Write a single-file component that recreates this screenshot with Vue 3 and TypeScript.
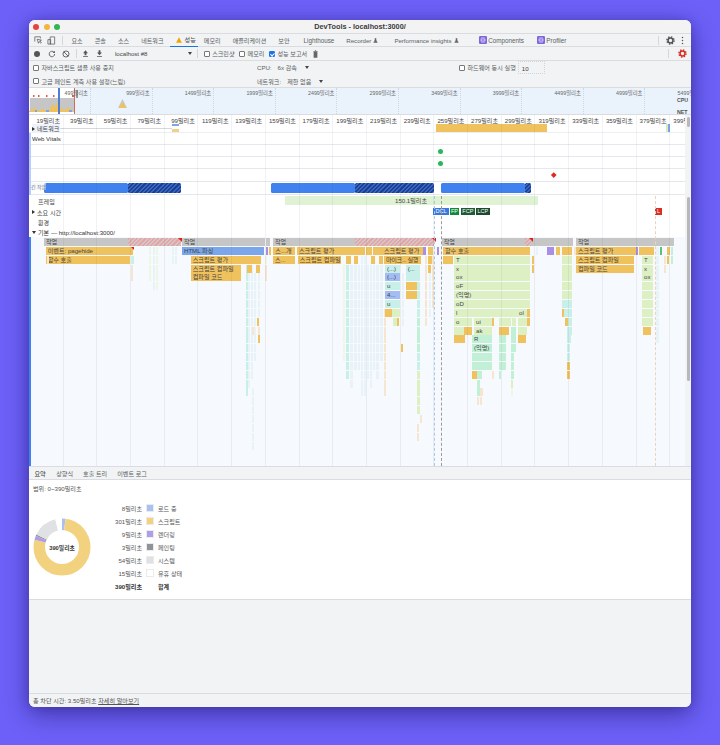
<script setup lang="ts">
interface Bar {
  r: number
  x1: number
  x2: number
  c: string
  t?: string
}

const tabs = ['요소', '콘솔', '소스', '네트워크']
const tabsAfter = ['메모리', '애플리케이션', '보안']
const subTabs = ['요약', '상향식', '호출 트리', '이벤트 로그']

const legend = [
  { value: '8밀리초', label: '로드 중', color: '#a9c1f2' },
  { value: '301밀리초', label: '스크립트', color: '#f2d17f' },
  { value: '9밀리초', label: '렌더링', color: '#ad9ee6' },
  { value: '3밀리초', label: '페인팅', color: '#8f9499' },
  { value: '54밀리초', label: '시스템', color: '#dfe1e5' },
  { value: '15밀리초', label: '유휴 상태', color: '#ffffff' },
]

// donut segments, pathLength is 390 so dash values are milliseconds
const donut = [
  { n: 8, color: '#a9c1f2' },
  { n: 301, color: '#f2d17f' },
  { n: 9, color: '#ad9ee6' },
  { n: 3, color: '#8f9499' },
  { n: 54, color: '#dfe1e5' },
  { n: 15, color: '#ffffff' },
].map((s, i, all) => ({
  ...s,
  offset: -all.slice(0, i).reduce((sum, p) => sum + p.n, 0),
}))

const ROW = 8.85
const gridX = Array.from({ length: 19 }, (_, i) => 62.6 + i * 33.7)
const rulerLabels = Array.from({ length: 20 }, (_, i) => ({ x: 60 + i * 33.7, t: `${19 + i * 20}밀리초` }))
const overviewLabels = Array.from({ length: 11 }, (_, i) => ({ x: 88 + i * 61.6, t: `${499 + i * 500}밀리초` }))

const bars: Bar[] = [
  // row 0 tasks
  { r: 0, x1: 44, x2: 128, c: 'task', t: '작업' },
  { r: 0, x1: 128, x2: 180.5, c: 'hatch' },
  { r: 0, x1: 182, x2: 265, c: 'task', t: '작업' },
  { r: 0, x1: 266, x2: 270, c: 'task' },
  { r: 0, x1: 273, x2: 355, c: 'task', t: '작업' },
  { r: 0, x1: 355, x2: 433.7, c: 'hatch' },
  { r: 0, x1: 441.7, x2: 525, c: 'task', t: '작업' },
  { r: 0, x1: 525, x2: 531, c: 'hatch' },
  { r: 0, x1: 531, x2: 573, c: 'task' },
  { r: 0, x1: 576, x2: 674, c: 'task', t: '작업' },
  // row 1
  { r: 1, x1: 45.7, x2: 133, c: 'y', t: '이벤트: pagehide' },
  { r: 1, x1: 182, x2: 264.3, c: 'b', t: 'HTML 파싱' },
  { r: 1, x1: 266, x2: 268, c: 'p' },
  { r: 1, x1: 268.5, x2: 270, c: 'y' },
  { r: 1, x1: 273.3, x2: 295, c: 'y', t: '스...개' },
  { r: 1, x1: 297, x2: 365, c: 'y', t: '스크립트 평가' },
  { r: 1, x1: 366, x2: 372, c: 'y' },
  { r: 1, x1: 373, x2: 382, c: 'y' },
  { r: 1, x1: 382, x2: 423, c: 'y', t: '스크립트 평가' },
  { r: 1, x1: 423, x2: 426, c: 'p' },
  { r: 1, x1: 428, x2: 433, c: 'y' },
  { r: 1, x1: 437, x2: 439, c: 'p' },
  { r: 1, x1: 443, x2: 530, c: 'y', t: '함수 호출' },
  { r: 1, x1: 547, x2: 554, c: 'p' },
  { r: 1, x1: 556, x2: 560, c: 'y' },
  { r: 1, x1: 562, x2: 572, c: 'y' },
  { r: 1, x1: 576, x2: 636, c: 'y', t: '스크립트 평가' },
  { r: 1, x1: 636, x2: 638, c: 'p' },
  { r: 1, x1: 639, x2: 654, c: 'y' },
  { r: 1, x1: 660, x2: 661.5, c: 'g2' },
  { r: 1, x1: 667, x2: 670, c: 'y' },
  { r: 1, x1: 671, x2: 673, c: 'm' },
  // row 2
  { r: 2, x1: 45.7, x2: 130.3, c: 'y', t: '함수 호출' },
  { r: 2, x1: 131, x2: 134, c: 'te' },
  { r: 2, x1: 190.7, x2: 260.7, c: 'y', t: '스크립트 평가' },
  { r: 2, x1: 273, x2: 295, c: 'y', t: '스...' },
  { r: 2, x1: 297.7, x2: 340.7, c: 'y', t: '스크립트 컴파일' },
  { r: 2, x1: 346, x2: 351, c: 'y' },
  { r: 2, x1: 354, x2: 358, c: 'y' },
  { r: 2, x1: 371, x2: 375, c: 'y' },
  { r: 2, x1: 379, x2: 383, c: 'y' },
  { r: 2, x1: 384, x2: 421, c: 'y tight', t: '마이크... 실행' },
  { r: 2, x1: 428, x2: 432, c: 'y' },
  { r: 2, x1: 443, x2: 453, c: 'y' },
  { r: 2, x1: 454, x2: 530, c: 'g', t: 'T' },
  { r: 2, x1: 532, x2: 533.5, c: 'y' },
  { r: 2, x1: 562, x2: 572, c: 'g' },
  { r: 2, x1: 576, x2: 634, c: 'y', t: '스크립트 컴파일' },
  { r: 2, x1: 642, x2: 653, c: 'g', t: 'T' },
  { r: 2, x1: 667, x2: 669, c: 'y' },
  { r: 2, x1: 671, x2: 673, c: 'm' },
  // row 3
  { r: 3, x1: 190.7, x2: 241, c: 'y', t: '스크립트 컴파일' },
  { r: 3, x1: 246.7, x2: 251.7, c: 'y' },
  { r: 3, x1: 256, x2: 259.6, c: 'y' },
  { r: 3, x1: 385, x2: 400, c: 'te', t: '(...)' },
  { r: 3, x1: 405.7, x2: 420, c: 'te', t: '(...' },
  { r: 3, x1: 428, x2: 431, c: 'y' },
  { r: 3, x1: 454, x2: 530, c: 'g', t: 'x' },
  { r: 3, x1: 532, x2: 533.5, c: 'y' },
  { r: 3, x1: 562, x2: 572, c: 'g' },
  { r: 3, x1: 576, x2: 634, c: 'y', t: '컴파일 코드' },
  { r: 3, x1: 642, x2: 653, c: 'g', t: 'x' },
  // row 4
  { r: 4, x1: 190.7, x2: 241, c: 'y', t: '컴파일 코드' },
  { r: 4, x1: 385, x2: 400, c: 'b2', t: '(...)' },
  { r: 4, x1: 405.7, x2: 420, c: 'te' },
  { r: 4, x1: 454, x2: 530, c: 'g', t: 'ox' },
  { r: 4, x1: 562, x2: 572, c: 'g' },
  { r: 4, x1: 642, x2: 653, c: 'g', t: 'ox' },
  // row 5
  { r: 5, x1: 385, x2: 400, c: 'te', t: 'u' },
  { r: 5, x1: 405.7, x2: 416.7, c: 'y' },
  { r: 5, x1: 417, x2: 420, c: 'te' },
  { r: 5, x1: 454, x2: 530, c: 'g', t: 'oF' },
  { r: 5, x1: 562, x2: 572, c: 'g' },
  { r: 5, x1: 642, x2: 653, c: 'g' },
  // row 6
  { r: 6, x1: 385, x2: 400, c: 'b2', t: '4...' },
  { r: 6, x1: 405.7, x2: 416.7, c: 'y' },
  { r: 6, x1: 417, x2: 420, c: 'te' },
  { r: 6, x1: 454, x2: 530, c: 'g', t: '(익명)' },
  { r: 6, x1: 562, x2: 572, c: 'g' },
  { r: 6, x1: 642, x2: 653, c: 'g' },
  // row 7
  { r: 7, x1: 385, x2: 400, c: 'te', t: 'u' },
  { r: 7, x1: 417, x2: 420, c: 'te' },
  { r: 7, x1: 454, x2: 530, c: 'g', t: 'oD' },
  { r: 7, x1: 562, x2: 572, c: 'te' },
  { r: 7, x1: 642, x2: 653, c: 'g' },
  // row 8
  { r: 8, x1: 385, x2: 392.3, c: 'y' },
  { r: 8, x1: 392.3, x2: 400, c: 'g' },
  { r: 8, x1: 417, x2: 420, c: 'te' },
  { r: 8, x1: 454, x2: 517, c: 'g', t: 'l' },
  { r: 8, x1: 517, x2: 527, c: 'g', t: 'ol' },
  { r: 8, x1: 527, x2: 530, c: 'y' },
  { r: 8, x1: 562, x2: 564, c: 'y' },
  { r: 8, x1: 564, x2: 572, c: 'te' },
  { r: 8, x1: 642, x2: 653, c: 'g' },
  // row 9
  { r: 9, x1: 393, x2: 397, c: 'g' },
  { r: 9, x1: 397, x2: 399, c: 'y' },
  { r: 9, x1: 417, x2: 420, c: 'm' },
  { r: 9, x1: 454, x2: 471.7, c: 'g', t: 'o' },
  { r: 9, x1: 474, x2: 491.7, c: 'g', t: 'ui' },
  { r: 9, x1: 492, x2: 494, c: 'y' },
  { r: 9, x1: 499, x2: 511, c: 'g' },
  { r: 9, x1: 511.5, x2: 516, c: 'g' },
  { r: 9, x1: 518, x2: 527, c: 'g' },
  { r: 9, x1: 527, x2: 530, c: 'y' },
  { r: 9, x1: 565, x2: 568, c: 'y' },
  { r: 9, x1: 568, x2: 572, c: 'te' },
  { r: 9, x1: 642, x2: 653, c: 'g' },
  // row 10
  { r: 10, x1: 417, x2: 420, c: 'm' },
  { r: 10, x1: 454, x2: 464, c: 'g' },
  { r: 10, x1: 464, x2: 472, c: 'y' },
  { r: 10, x1: 474, x2: 492, c: 'g', t: 'ak' },
  { r: 10, x1: 499, x2: 506, c: 'y' },
  { r: 10, x1: 506, x2: 509, c: 'y' },
  { r: 10, x1: 511, x2: 516, c: 'm' },
  { r: 10, x1: 518, x2: 527, c: 'g' },
  { r: 10, x1: 567, x2: 572, c: 'te' },
  { r: 10, x1: 643, x2: 651, c: 'y' },
  // row 11
  { r: 11, x1: 417, x2: 420, c: 'm' },
  { r: 11, x1: 454, x2: 465, c: 'y' },
  { r: 11, x1: 472, x2: 492, c: 'm', t: 'R' },
  { r: 11, x1: 499, x2: 506, c: 'm' },
  { r: 11, x1: 511, x2: 516, c: 'm' },
  { r: 11, x1: 518, x2: 526, c: 'y' },
  { r: 11, x1: 567, x2: 571, c: 'te' },
  // row 12
  { r: 12, x1: 401, x2: 403, c: 'y' },
  { r: 12, x1: 417, x2: 420, c: 'm' },
  { r: 12, x1: 472, x2: 492, c: 'm', t: '(익명)' },
  { r: 12, x1: 499, x2: 506, c: 'm' },
  { r: 12, x1: 511, x2: 516, c: 'm' },
  { r: 12, x1: 567, x2: 570, c: 'te' },
  // rows below
  { r: 13, x1: 417, x2: 420, c: 'te' },
  { r: 13, x1: 472, x2: 492, c: 'm' },
  { r: 13, x1: 499, x2: 506, c: 'm' },
  { r: 13, x1: 511, x2: 514, c: 'm' },
  { r: 13, x1: 567, x2: 570, c: 'te' },
  { r: 14, x1: 417, x2: 420, c: 'te' },
  { r: 14, x1: 472, x2: 492, c: 'm' },
  { r: 14, x1: 499, x2: 506, c: 'm' },
  { r: 14, x1: 511, x2: 514, c: 'm' },
  { r: 14, x1: 567, x2: 570, c: 'y' },
  { r: 15, x1: 417, x2: 420, c: 'g' },
  { r: 15, x1: 472, x2: 477, c: 'y' },
  { r: 15, x1: 477, x2: 481.5, c: 'm' },
  { r: 15, x1: 492, x2: 493, c: 'py' },
  { r: 15, x1: 499, x2: 500, c: 'm' },
  { r: 15, x1: 511, x2: 514, c: 'm' },
  { r: 15, x1: 567, x2: 570, c: 'y' },
  { r: 16, x1: 417, x2: 420, c: 'g' },
  { r: 16, x1: 477, x2: 480, c: 'm' },
  { r: 16, x1: 511, x2: 513, c: 'g' },
  { r: 17, x1: 417, x2: 420, c: 'g' },
  { r: 17, x1: 477, x2: 480, c: 'm' },
  { r: 17, x1: 480, x2: 483, c: 'py' },
  { r: 17, x1: 511, x2: 513, c: 'pg' },
  { r: 18, x1: 417, x2: 420, c: 'g' },
  { r: 18, x1: 477, x2: 479, c: 'py' },
  { r: 18, x1: 480, x2: 482, c: 'py' },
  { r: 19, x1: 417, x2: 420, c: 'g' },
  { r: 20, x1: 420, x2: 421, c: 'py' },
  { r: 21, x1: 417, x2: 418, c: 'py' },
  { r: 22, x1: 417, x2: 418, c: 'py' },
  // small left marks
  { r: 2, x1: 47, x2: 48, c: 'py' },
  { r: 3, x1: 131, x2: 132.5, c: 'py' },
  { r: 4, x1: 131, x2: 132.5, c: 'py' },
  { r: 2, x1: 265, x2: 267, c: 'pg' },
  { r: 3, x1: 265, x2: 266, c: 'py' },
  { r: 4, x1: 265, x2: 266, c: 'py' },
  { r: 9, x1: 257, x2: 259, c: 'y' },
  { r: 10, x1: 252, x2: 253, c: 'py' },
  { r: 10, x1: 258, x2: 259, c: 'py' },
  { r: 11, x1: 258, x2: 259, c: 'y' },
]

// pale columns under the script blocks: [x, width, first row, last row, colour]
const columns: [number, number, number, number, string][] = [
  [149, 1, 1, 4, 'pg'], [153, 1, 1, 5, 'pt'], [156, 1, 1, 5, 'pg'], [172, 2, 1, 2, 'pt'], [175, 2, 1, 2, 'pt'],
  [245.7, 1.5, 3, 17, 'te'], [248, 2, 3, 16, 'pt'], [251, 2, 3, 15, 'pt'], [254, 2, 4, 13, 'pt'], [258, 1, 3, 8, 'pt'], [252, 0.7, 17, 23, 'pt'],
  [343, 2, 3, 13, 'pg'], [346, 3, 3, 15, 'te'], [350, 3, 3, 16, 'pt'], [354, 3, 3, 14, 'pt'], [358, 2, 3, 14, 'pt'],
  [361, 2, 2, 17, 'pt'], [364, 2, 2, 17, 'pt'], [367, 2, 3, 15, 'pt'], [370, 2, 3, 16, 'pt'], [373, 2, 3, 14, 'pt'],
  [376, 3, 3, 15, 'pt'], [380, 3, 3, 13, 'pt'], [384, 1, 8, 17, 'py'], [402, 2, 4, 9, 'pt'],
  [425, 1, 2, 9, 'py'], [429, 2, 3, 8, 'pt'], [432, 1, 2, 7, 'py'],
  [536, 1, 1, 1, 'pt'], [574, 1, 1, 1, 'py'], [664, 1, 2, 3, 'py'], [656, 3, 1, 11, 'pt'],
]

const allBars = [
  ...columns.flatMap(([x, w, from, to, c]) =>
    Array.from({ length: to - from + 1 }, (_, i) => ({ r: from + i, x1: x, x2: x + w, c } as Bar)),
  ),
  ...bars,
]

function barStyle(b: Bar) {
  return {
    left: `${b.x1 - 29}px`,
    width: `${b.x2 - b.x1}px`,
    top: `${1 + b.r * ROW}px`,
  }
}
</script>

<template>
  <div class="page">
    <div class="window">
      <div class="titlebar">
        <div class="lights"><i class="light-red"></i><i class="light-amber"></i><i class="light-green"></i></div>
        <span class="title">DevTools - localhost:3000/</span>
      </div>

      <div class="tabbar">
        <svg viewBox="0 0 10 10" width="8" height="8"><path d="M1 7V1h7v2M4 4l1.5 5 1-2 2 2 .8-.8-2-2 2-1z" fill="none" stroke="#555" stroke-width=".9"/></svg>
        <svg class="dev" viewBox="0 0 10 10" width="9" height="9"><path d="M3.5 1h5v8h-5zM1 4h3v5H1z" fill="#f1f3f4" stroke="#555" stroke-width=".8"/></svg>
        <span class="vsep first"></span>
        <span v-for="t in tabs" :key="t" class="tab">{{ t }}</span>
        <span class="tab active">
          <svg viewBox="0 0 10 10" width="6" height="6"><path d="M5 .5 9.8 9.5H.2z" fill="#f2a600"/></svg>
          성능
        </span>
        <span v-for="t in tabsAfter" :key="t" class="tab">{{ t }}</span>
        <span class="tab lh">Lighthouse</span>
        <span class="tab">Recorder
          <svg viewBox="0 0 10 10" width="5" height="5"><path d="M3.5 1h3M4 1v3L1.5 9h7L6 4V1" fill="#666" stroke="#666"/></svg>
        </span>
        <span class="tab perf">Performance insights
          <svg viewBox="0 0 10 10" width="5" height="5"><path d="M3.5 1h3M4 1v3L1.5 9h7L6 4V1" fill="#666" stroke="#666"/></svg>
        </span>
        <span class="tab ext">
          <svg viewBox="0 0 10 10" width="8" height="8"><rect width="10" height="10" rx="1.5" fill="#7d66d9"/><g fill="none" stroke="#e7e0ff" stroke-width=".5"><ellipse cx="5" cy="5" rx="3.6" ry="1.4"/><ellipse cx="5" cy="5" rx="3.6" ry="1.4" transform="rotate(60 5 5)"/><ellipse cx="5" cy="5" rx="3.6" ry="1.4" transform="rotate(120 5 5)"/></g></svg>
          Components
        </span>
        <span class="tab ext prof">
          <svg viewBox="0 0 10 10" width="8" height="8"><rect width="10" height="10" rx="1.5" fill="#7d66d9"/><g fill="none" stroke="#e7e0ff" stroke-width=".5"><ellipse cx="5" cy="5" rx="3.6" ry="1.4"/><ellipse cx="5" cy="5" rx="3.6" ry="1.4" transform="rotate(60 5 5)"/><ellipse cx="5" cy="5" rx="3.6" ry="1.4" transform="rotate(120 5 5)"/></g></svg>
          Profiler
        </span>
        <span class="spacer"></span>
        <span class="vsep"></span>
        <svg class="gear" viewBox="0 0 24 24" width="9" height="9">
          <circle cx="12" cy="12" r="9.5" fill="none" stroke="#555" stroke-width="4" stroke-dasharray="3.7 3.76"/>
          <circle cx="12" cy="12" r="6.5" fill="none" stroke="#555" stroke-width="4"/>
        </svg>
        <svg class="kebab" viewBox="0 0 4 12" width="3" height="9"><g fill="#555"><circle cx="2" cy="2" r="1"/><circle cx="2" cy="6" r="1"/><circle cx="2" cy="10" r="1"/></g></svg>
      </div>

      <div class="toolbar">
        <span class="rec"></span>
        <svg class="tool" viewBox="0 0 10 10" width="8" height="8"><path d="M8.3 5A3.4 3.4 0 1 1 7.3 2.6" fill="none" stroke="#555" stroke-width="1.1"/><path d="M8.6.8v2.9H5.7z" fill="#555"/></svg>
        <svg class="tool last" viewBox="0 0 10 10" width="8" height="8"><circle cx="5" cy="5" r="3.8" fill="none" stroke="#555" stroke-width="1.1"/><path d="M2.3 2.3 7.7 7.7" stroke="#555" stroke-width="1.1"/></svg>
        <span class="vsep bar-sep"></span>
        <svg class="load" viewBox="0 0 10 10" width="7" height="7"><path d="M5 .5 8.5 4.5H6.3V7.5H3.7V4.5H1.5zM1.5 8.5h7v1h-7z" fill="#555"/></svg>
        <svg class="load" viewBox="0 0 10 10" width="7" height="7"><path d="M5 7.5 8.5 3.5H6.3V.5H3.7V3.5H1.5zM1.5 8.5h7v1h-7z" fill="#555"/></svg>
        <span class="target">localhost #8<i class="caret"></i></span>
        <span class="vsep target-sep"></span>
        <label class="check"><i class="box"></i>스크린샷</label>
        <label class="check"><i class="box"></i>메모리</label>
        <label class="check"><i class="box on"></i>성능 보고서</label>
        <svg class="trash" viewBox="0 0 8 12" width="5" height="8"><path d="M1 2.5h6V12H1zM.5 1h7v1h-7zM3 0h2v1H3z" fill="#666"/></svg>
        <span class="spacer"></span>
        <span class="vsep"></span>
        <svg class="gear alert" viewBox="0 0 24 24" width="9" height="9">
          <circle cx="12" cy="12" r="9.5" fill="none" stroke="#d93025" stroke-width="4" stroke-dasharray="3.7 3.76"/>
          <circle cx="12" cy="12" r="6.5" fill="none" stroke="#d93025" stroke-width="4"/>
        </svg>
      </div>

      <div class="settings">
        <label class="check"><i class="box"></i>자바스크립트 샘플 사용 중지</label>
        <div class="throttle"><span>CPU:</span><span class="val">6x 감속</span><i class="caret cpu"></i></div>
        <div class="hw"><label class="check"><i class="box"></i>하드웨어 동시 실행</label><span class="num">10</span></div>
        <label class="check"><i class="box"></i>고급 페인트 계측 사용 설정(느림)</label>
        <div class="throttle"><span>네트워크:</span><span class="val">제한 없음</span><i class="caret net"></i></div>
      </div>

      <div class="overview">
        <div class="ov-window"></div>
        <svg class="ov-chart" viewBox="0 0 46 27" width="46" height="27">
          <path d="M1 10h44v14H1z" fill="#c6c6c6"/>
          <path d="M0 23 6 20l4 3 4-2 5 3 5-8 3 5 4-2 3 3 6-2 4 3v1H0z" fill="#f0c25e"/>
          <path d="M24 24l4-10 4 10z" fill="#f0c25e"/>
          <path d="M4 7h1.5v2H4zM9 7h1.5v2H9zM17 7h1.5v2H17zM24 7h1.5v2H24zM43 7h2v2h-2z" fill="#e25b4a"/>
          <path d="M17 22h3v2h-3zM6 22h2v2H6zM40 22h3v2h-3z" fill="#7ba7ea"/>
        </svg>
        <i class="ov-handle"></i>
        <i class="ov-red"></i>
        <i class="ov-gray"></i>
        <svg class="ov-peak" viewBox="0 0 12 12" width="9" height="11"><path d="M6 0 12 12H0z" fill="#c6c6c6"/><path d="M6 4 11 12H1z" fill="#f0c25e"/></svg>
        <template v-for="l in overviewLabels" :key="l.t">
          <span class="ov-label" :style="{ left: `${l.x - 29 - 40}px` }">{{ l.t }}</span>
          <i class="ov-grid" :style="{ left: `${l.x - 27}px` }"></i>
        </template>
        <span class="ov-name cpu">CPU</span>
        <span class="ov-name net">NET</span>
      </div>

      <div class="timeline">
        <div class="tracks">
          <div class="ruler">
            <span v-for="l in rulerLabels" :key="l.t" class="ruler-label" :style="{ left: `${l.x - 29 - 40}px` }">{{ l.t }}</span>
          </div>
          <div class="track network">
            <span class="net-name"><i class="tri right"></i>네트워크</span>
            <i class="net-line"></i>
            <i class="net-req"></i>
            <i class="net-bar"></i>
            <i class="net-end"></i>
          </div>
          <div class="vitals">
            <div class="vital-row first">Web Vitals</div>
            <div class="vital-row"><i class="dot"></i></div>
            <div class="vital-row"><i class="dot"></i></div>
            <div class="vital-row tall"><i class="diamond"></i></div>
            <div class="long-row">
              <span class="long-label">긴 작업</span>
              <i class="long solid" style="left: 13px; width: 84px"></i>
              <i class="long hatched" style="left: 97px; width: 52.5px"></i>
              <i class="long solid" style="left: 239.5px; width: 84.5px"></i>
              <i class="long hatched" style="left: 324px; width: 78.7px"></i>
              <i class="long solid" style="left: 410px; width: 84px"></i>
              <i class="long hatched" style="left: 494px; width: 6px"></i>
            </div>
          </div>
          <div class="track frames">
            <span class="name">프레임</span>
            <span class="frame-bar">150.1밀리초</span>
          </div>
          <div class="track timing">
            <span class="name with-tri"><i class="tri right"></i>소요 시간</span>
            <span class="mark dcl">DCL</span>
            <span class="mark fp">FP</span>
            <span class="mark fcp">FCP</span>
            <span class="mark lcp">LCP</span>
            <span class="mark l">L</span>
          </div>
          <div class="track env"><span class="name">환경</span></div>
          <div class="track main-head"><i class="tri down"></i>기본 — http://localhost:3000/</div>
          <div class="flame">
            <div
              v-for="(b, i) in allBars"
              :key="i"
              class="bar"
              :class="b.c"
              :style="barStyle(b)"
            >{{ b.t }}</div>
            <i class="corner" style="left: 147px"></i>
            <i class="corner" style="left: 400.5px"></i>
            <i class="corner" style="left: 497.5px"></i>
            <i class="corner small" style="left: 100px; top: 10px"></i>
          </div>
        </div>
        <i v-for="x in gridX" :key="x" class="gridline" :style="{ left: `${x - 29}px` }"></i>
        <i class="vline blue"></i>
        <i class="vline gray"></i>
        <i class="vline orange"></i>
        <div class="scrollbar">
          <i class="thumb top"></i>
          <i class="thumb"></i>
        </div>
      </div>

      <div class="subtabs">
        <span v-for="(t, i) in subTabs" :key="t" class="subtab" :class="{ active: i === 0 }">{{ t }}</span>
      </div>

      <div class="summary">
        <div class="range">범위: 0~390밀리초</div>
        <div class="summary-body">
          <div class="pie">
            <svg viewBox="0 0 60 60" width="60" height="60">
              <g transform="rotate(-90 30 30)">
                <circle
                  v-for="s in donut"
                  :key="s.color"
                  cx="30"
                  cy="30"
                  r="22.75"
                  fill="none"
                  :stroke="s.color"
                  stroke-width="11.5"
                  pathLength="390"
                  :stroke-dasharray="`${s.n} ${390 - s.n}`"
                  :stroke-dashoffset="s.offset"
                />
              </g>
            </svg>
            <span class="pie-total">390밀리초</span>
          </div>
          <div class="legend">
            <div v-for="l in legend" :key="l.label" class="legend-row">
              <span class="legend-value">{{ l.value }}</span>
              <i class="swatch" :style="{ background: l.color }"></i>
              <span>{{ l.label }}</span>
            </div>
            <div class="legend-row total">
              <span class="legend-value">390밀리초</span>
              <i class="swatch none"></i>
              <span>합계</span>
            </div>
          </div>
        </div>
      </div>

      <div class="empty"></div>
      <div class="footer">총 차단 시간: 3.50밀리초 <u>자세히 알아보기</u></div>
    </div>
  </div>
</template>

<style>
html, body {
  margin: 0;
  background: #6c60f8;
}
</style>

<style scoped>
.page {
  width: 720px;
  height: 745px;
  box-sizing: border-box;
  padding: 20px 29px 38px;
  overflow: hidden;
  background: #6c60f8;
  font-family: "Liberation Sans", "Noto Sans CJK KR", sans-serif;
  font-size: 6.1px;
  color: #444;
}

.window {
  height: 687px;
  display: flex;
  flex-direction: column;
  border-radius: 6px;
  overflow: hidden;
  background: #f1f3f4;
  box-shadow: 0 8px 24px rgba(20, 10, 80, 0.45), 0 0 12px rgba(20, 10, 80, 0.2);
}

i { display: block; font-style: normal; }

.titlebar {
  height: 14px;
  flex: none;
  position: relative;
  display: flex;
  align-items: center;
  justify-content: center;
  background: #f3f3f3;
  border-bottom: 1px solid #dadce0;
  box-sizing: border-box;
}
.title { font-size: 7.3px; font-weight: 700; color: #3c3c3c; }
.lights { position: absolute; left: 4px; top: 3.5px; display: flex; gap: 4.5px; }
.lights i { width: 6px; height: 6px; border-radius: 50%; }
.light-red { background: #e8443f; }
.light-amber { background: #f2b53f; }
.light-green { background: #35b552; }

.tabbar {
  height: 13px;
  flex: none;
  display: flex;
  align-items: center;
  padding-left: 5px;
  box-sizing: border-box;
  background: #f1f3f4;
  border-bottom: 1px solid #dadce0;
  white-space: nowrap;
}
.dev { margin-left: 5px; }
.vsep { width: 1px; height: 9px; background: #d4d6d9; flex: none; margin: 0 3px 0 4px; }
.vsep.first { margin: 0 2.5px 0 6px; }
.tab {
  height: 13px;
  display: flex;
  align-items: center;
  gap: 2px;
  padding: 0 6px;
  box-sizing: border-box;
  color: #5a5e63;
}
.tab.active { padding: 0 2.5px 0 6px; gap: 3px; margin: 0 -0.5px 0 0; color: #444; border-bottom: 1px solid #1a73e8; }
.tab.lh { margin-left: 2px; padding-left: 6px; font-size: 6.3px; }
.tab.perf { margin-left: 4px; }
.tab.ext { margin-left: 10px; font-size: 6.3px; gap: 1.5px; padding: 0 4px; }
.tab.prof { margin-left: 5px; }
.spacer { flex: 1; }
.gear { margin: 0 6px 0 4px; }
.kebab { margin-right: 7px; }

.toolbar {
  height: 14px;
  flex: none;
  display: flex;
  align-items: center;
  padding-left: 5px;
  box-sizing: border-box;
  background: #f1f3f4;
  border-bottom: 1px solid #dadce0;
  white-space: nowrap;
}
.rec { width: 6px; height: 6px; border-radius: 50%; background: #555; margin-right: 7.7px; }
.tool { margin-right: 6.6px; }
.tool.last { margin-right: 5.7px; }
.vsep.bar-sep { margin: 0 5px 0 0; }
.load { margin-right: 7.5px; }
.target { width: 78px; margin-left: 4px; display: flex; align-items: center; justify-content: space-between; padding-right: 1px; box-sizing: border-box; }
.vsep.target-sep { margin: 0 6px 0 3.7px; }
.caret { width: 0; height: 0; border: 2px solid transparent; border-top: 3px solid #444; border-bottom: 0; }
.check { display: flex; align-items: center; gap: 2.5px; margin-right: 7px; color: #5a5e63; }
.toolbar .check { margin-right: 4.5px; }
.box { width: 6px; height: 6px; box-sizing: border-box; border: 0.8px solid #777; border-radius: 1px; background: #fff; flex: none; position: relative; }
.box.on { background: #1a73e8; border-color: #1a73e8; }
.box.on::after { content: ""; position: absolute; left: 1.2px; top: 0; width: 1.5px; height: 3px; border: solid #fff; border-width: 0 0.8px 0.8px 0; transform: rotate(45deg); }
.trash { margin-left: 1px; }
.gear.alert { margin: 0 4px 0 6px; }

.settings {
  height: 27px;
  flex: none;
  box-sizing: border-box;
  padding-left: 4px;
  display: grid;
  grid-template-columns: 224px 202px 1fr;
  grid-template-rows: 13.5px 13.5px;
  align-items: center;
  background: #f1f3f4;
  border-bottom: 1px solid #dadce0;
  white-space: nowrap;
}
.throttle { display: flex; align-items: center; color: #5a5e63; }
.val { margin-left: 6px; }
.caret.cpu { margin-left: 8px; }
.caret.net { margin-left: 8px; }
.settings > label:nth-child(4) { grid-column: 1; }
.hw { display: flex; align-items: center; }
.hw .check { margin-right: 2px; }
.num { width: 27px; height: 13px; box-sizing: border-box; padding: 3px; border: 1px dotted #d0d3d7; }

.overview {
  height: 26px;
  flex: none;
  position: relative;
  background: #eaf2fb;
  border-bottom: 1px solid #dadce0;
  overflow: hidden;
}
.ov-window { position: absolute; left: 0; top: 0; bottom: 0; width: 45px; background: #fff; }
.ov-chart { position: absolute; left: 0; top: 0; }
.ov-handle { position: absolute; left: 29px; top: 0; bottom: 0; width: 1.5px; background: #4b7fd6; }
.ov-red { position: absolute; left: 45px; top: 0; bottom: 0; width: 1px; background: #c9705c; }
.ov-gray { position: absolute; left: 47px; top: 2px; width: 2px; height: 8px; background: #999; }
.ov-peak { position: absolute; left: 89px; top: 10px; }
.ov-label { position: absolute; top: 1px; width: 40px; text-align: right; font-size: 5.3px; color: #666; }
.ov-grid { position: absolute; top: 0; bottom: 0; border-left: 1px dotted #cfd6de; }
.ov-name { position: absolute; left: 648px; font-size: 5.3px; font-weight: 700; color: #555; }
.ov-name.cpu { top: 9px; }
.ov-name.net { top: 21px; }

.timeline {
  height: 351px;
  flex: none;
  position: relative;
  background: #fff;
  overflow: hidden;
}
.tracks { width: 656px; height: 100%; display: flex; flex-direction: column; }
.ruler { height: 9px; flex: none; position: relative; }
.ruler-label { position: absolute; top: 1px; width: 40px; text-align: right; color: #444; white-space: nowrap; }

.track { flex: none; position: relative; box-sizing: border-box; }
.network { height: 9px; border-bottom: 1px solid #eceef1; }
.net-name { position: absolute; left: 3px; top: 0; display: flex; align-items: center; gap: 2px; background: #eef3fb; padding-right: 1px; z-index: 1; }
.tri { width: 0; height: 0; border: 2px solid transparent; flex: none; }
.tri.right { border-left: 3px solid #333; border-right: 0; }
.tri.down { border-top: 3px solid #333; border-bottom: 0; }
.net-line { position: absolute; left: 30px; top: 4px; width: 120px; height: 1px; background: #d5d8dc; }
.net-req { position: absolute; left: 143px; top: 0; width: 7px; height: 8px; background: linear-gradient(#7ba7ea 30%, #fff 30%, #fff 60%, #f0d189 60%); }
.net-bar { position: absolute; left: 406.7px; top: 0; width: 111px; height: 8px; background: #f0c25e; }
.net-end { position: absolute; left: 637px; top: 0; width: 4px; height: 8px; background: linear-gradient(90deg, #d6ecc8 50%, #7ba7ea 50%); }

.vitals {
  flex: none;
  height: 62px;
  display: flex;
  flex-direction: column;
  border-left: 2px solid #b6cdf5;
}
.vital-row { height: 12px; box-sizing: border-box; border-bottom: 1px solid #e6e8eb; position: relative; }
.vital-row.first { padding: 1.5px 0 0 1px; color: #333; }
.vital-row.tall { height: 13px; }
.dot { position: absolute; left: 407px; top: 4px; width: 5px; height: 5px; border-radius: 50%; background: #27b85c; }
.diamond { position: absolute; left: 521px; top: 4px; width: 3.5px; height: 3.5px; background: #e02a20; transform: rotate(45deg); }
.long-row { flex: 1; position: relative; border-bottom: 1px solid #e6e8eb; }
.long-label { position: absolute; left: 0; top: 1px; font-size: 5px; color: #777; z-index: 1; background: rgba(238, 243, 251, 0.6); }
.long { position: absolute; top: 0.5px; height: 10.5px; border-radius: 1.5px; }
.solid { background: #3f81ee; }
.hatched { background: repeating-linear-gradient(135deg, #1d3f8f 0 1.5px, #3766c4 1.5px 3px); }

.frames { height: 11px; }
.name { position: absolute; left: 9px; top: 1.5px; color: #444; }
.name.with-tri { left: 3px; display: flex; align-items: center; gap: 2px; }
.frame-bar {
  position: absolute;
  left: 256px;
  top: 1px;
  width: 252.7px;
  height: 9px;
  box-sizing: border-box;
  background: #dff2d4;
  padding-left: 110px;
  line-height: 9px;
  color: #444;
}
.timing { height: 10px; }
.mark { position: absolute; top: 1.5px; height: 7.5px; line-height: 7.5px; text-align: center; color: #fff; font-size: 5.5px; }
.dcl { left: 404px; width: 16px; background: #3b78db; }
.fp { left: 421px; width: 9px; background: #0f8a3c; }
.fcp { left: 431.7px; width: 14.3px; background: #1f5c36; }
.lcp { left: 446.7px; width: 14.3px; background: #1b4a2c; }
.l { left: 626px; width: 7px; background: #d93025; }
.env { height: 11px; }
.main-head { height: 10px; display: flex; align-items: center; gap: 2px; padding-left: 3px; color: #333; }

.flame { flex: 1; position: relative; background: #f6f9fe; border-left: 2px solid #3f81ee; box-sizing: border-box; }
.bar {
  position: absolute;
  height: 8px;
  line-height: 8px;
  padding-left: 2px;
  box-sizing: border-box;
  margin-left: -2px;
  white-space: pre;
  overflow: hidden;
  color: #444;
}
.tight { letter-spacing: -0.3px; }
.task { background: #c6c6c6; }
.hatch { background: repeating-linear-gradient(135deg, #e3a5a5 0 1.5px, #d4c6c6 1.5px 3px); }
.y { background: #f0c25e; }
.b { background: #7ba7ea; }
.b2 { background: #a3bdf3; }
.p { background: #a98fe3; }
.g { background: #dcf0c4; }
.g2 { background: #5cbf7a; }
.m { background: #c2f0d6; }
.te { background: #c8efe8; }
.py { background: #f6e6d0; }
.pg { background: #eef6e4; }
.pt { background: #e8f3f8; }
.corner { position: absolute; top: 1px; width: 0; height: 0; border-top: 4px solid #e01f1f; border-left: 4px solid transparent; }
.corner.small { border-top-width: 3px; border-left-width: 3px; }

.gridline { position: absolute; top: 0; bottom: 0; width: 1px; background: rgba(60, 70, 90, 0.07); }
.vline { position: absolute; top: 81px; bottom: 0; width: 0; }
.vline.blue { left: 404.5px; border-left: 1px dashed #a9c9e8; }
.vline.gray { left: 411.5px; border-left: 1px dashed #9a9a9a; }
.vline.orange { left: 626px; border-left: 1px dashed #eed3b8; }

.scrollbar { position: absolute; right: 0; top: 0; bottom: 0; width: 6px; background: #f1f3f4; }
.thumb { position: absolute; left: 1.5px; top: 82px; width: 3.5px; height: 184px; border-radius: 2px; background: #b8b8b8; }
.thumb.top { top: 2px; height: 10px; }

.subtabs {
  height: 14px;
  flex: none;
  box-sizing: border-box;
  display: flex;
  background: #f1f3f4;
  border-top: 1px solid #dadce0;
  border-bottom: 1px solid #dadce0;
  padding-top: 1px;
}
.subtab { padding: 0 5px; line-height: 11px; color: #5a5e63; }
.subtab.active { color: #333; border-bottom: 1px solid #1a73e8; height: 12px; padding: 0 5.5px; }

.summary {
  height: 120px;
  flex: none;
  box-sizing: border-box;
  background: #fff;
  border-bottom: 1px solid #dadce0;
  padding: 5px 0 0 4px;
}
.range { color: #555; line-height: 8px; }
.summary-body { display: flex; }
.pie { position: relative; width: 60px; height: 60px; margin: 24px 0 0 -1px; flex: none; }
.pie-total { position: absolute; inset: 0; display: flex; align-items: center; justify-content: center; color: #333; font-weight: 700; font-size: 5.8px; }
.legend { margin: 8.5px 0 0 0; }
.legend-row { height: 13px; display: flex; align-items: center; color: #555; }
.legend-value { width: 50px; text-align: right; margin-right: 4.5px; }
.swatch { width: 6.5px; height: 6.5px; margin-right: 5px; box-sizing: border-box; outline: 0.5px solid rgba(0, 0, 0, 0.08); }
.swatch.none { outline: none; }
.legend-row.total { font-weight: 700; color: #333; }

.empty { flex: 1; background: #f1f3f4; }
.footer {
  height: 14px;
  flex: none;
  box-sizing: border-box;
  border-top: 1px solid #d9dde0;
  padding-left: 4px;
  line-height: 13px;
  background: #f1f3f4;
  color: #555;
}
</style>
